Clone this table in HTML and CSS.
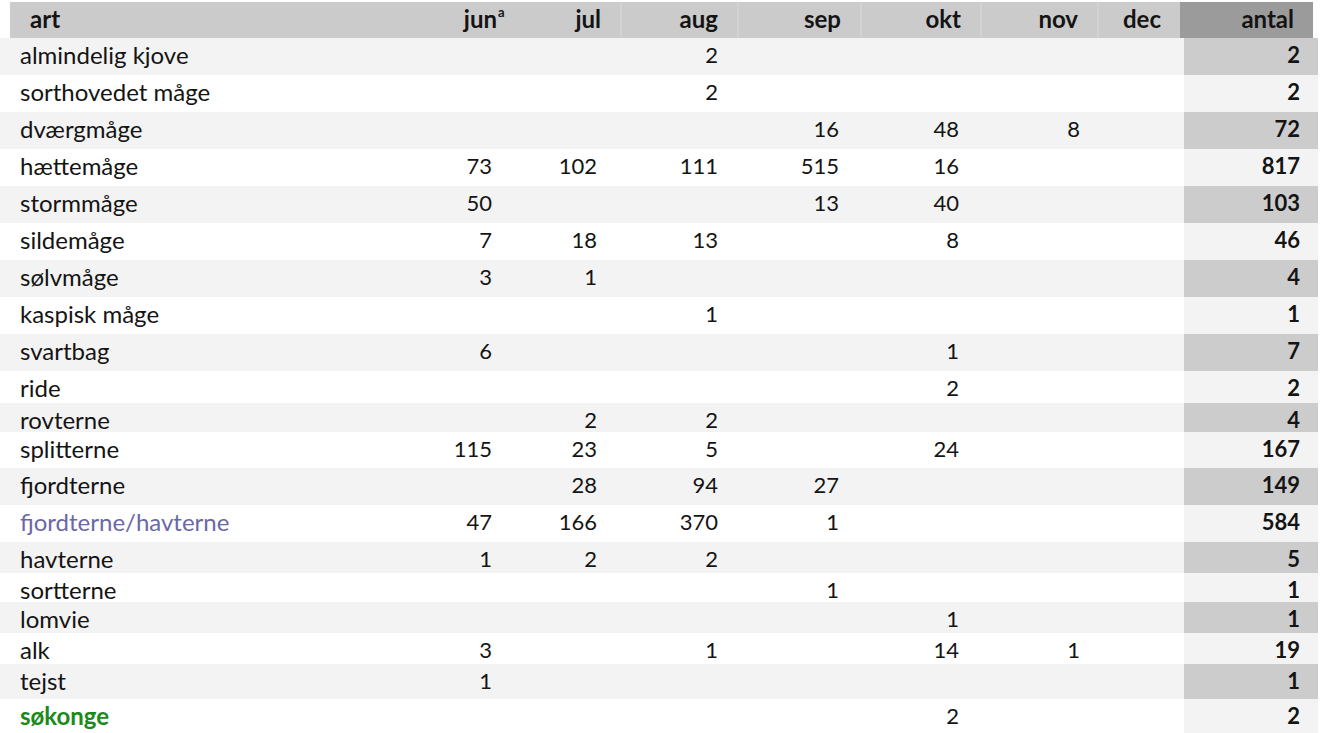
FILE: index.html
```html
<!DOCTYPE html>
<html lang="da">
<head>
<meta charset="utf-8">
<title>art</title>
<link rel="stylesheet" href="styles.css">
</head>
<body>
<div class="table">
  <div class="head">
    <div class="hc first">art</div>
    <div class="hc num"><span class="jun">jun<sup>a</sup></span></div>
    <div class="hc num">jul</div>
    <div class="hc num sep">aug</div>
    <div class="hc num sep">sep</div>
    <div class="hc num sep">okt</div>
    <div class="hc num sep">nov</div>
    <div class="hc num sep">dec</div>
    <div class="hc num total">antal</div>
  </div>

  <div class="row odd h37"><div class="c name">almindelig kjove</div><div class="c"></div><div class="c"></div><div class="c">2</div><div class="c"></div><div class="c"></div><div class="c"></div><div class="c"></div><div class="c tot">2</div></div>
  <div class="row even h37"><div class="c name">sorthovedet måge</div><div class="c"></div><div class="c"></div><div class="c">2</div><div class="c"></div><div class="c"></div><div class="c"></div><div class="c"></div><div class="c tot">2</div></div>
  <div class="row odd h37"><div class="c name">dværgmåge</div><div class="c"></div><div class="c"></div><div class="c"></div><div class="c">16</div><div class="c">48</div><div class="c">8</div><div class="c"></div><div class="c tot">72</div></div>
  <div class="row even h37"><div class="c name">hættemåge</div><div class="c">73</div><div class="c">102</div><div class="c">111</div><div class="c">515</div><div class="c">16</div><div class="c"></div><div class="c"></div><div class="c tot">817</div></div>
  <div class="row odd h37"><div class="c name">stormmåge</div><div class="c">50</div><div class="c"></div><div class="c"></div><div class="c">13</div><div class="c">40</div><div class="c"></div><div class="c"></div><div class="c tot">103</div></div>
  <div class="row even h37"><div class="c name">sildemåge</div><div class="c">7</div><div class="c">18</div><div class="c">13</div><div class="c"></div><div class="c">8</div><div class="c"></div><div class="c"></div><div class="c tot">46</div></div>
  <div class="row odd h37"><div class="c name">sølvmåge</div><div class="c">3</div><div class="c">1</div><div class="c"></div><div class="c"></div><div class="c"></div><div class="c"></div><div class="c"></div><div class="c tot">4</div></div>
  <div class="row even h37"><div class="c name">kaspisk måge</div><div class="c"></div><div class="c"></div><div class="c">1</div><div class="c"></div><div class="c"></div><div class="c"></div><div class="c"></div><div class="c tot">1</div></div>
  <div class="row odd h37"><div class="c name">svartbag</div><div class="c">6</div><div class="c"></div><div class="c"></div><div class="c"></div><div class="c">1</div><div class="c"></div><div class="c"></div><div class="c tot">7</div></div>
  <div class="row even h32"><div class="c name">ride</div><div class="c"></div><div class="c"></div><div class="c"></div><div class="c"></div><div class="c">2</div><div class="c"></div><div class="c"></div><div class="c tot">2</div></div>
  <div class="row odd h29"><div class="c name">rovterne</div><div class="c"></div><div class="c">2</div><div class="c">2</div><div class="c"></div><div class="c"></div><div class="c"></div><div class="c"></div><div class="c tot">4</div></div>
  <div class="row even h36"><div class="c name">splitterne</div><div class="c">115</div><div class="c">23</div><div class="c">5</div><div class="c"></div><div class="c">24</div><div class="c"></div><div class="c"></div><div class="c tot">167</div></div>
  <div class="row odd h37"><div class="c name">fjordterne</div><div class="c"></div><div class="c">28</div><div class="c">94</div><div class="c">27</div><div class="c"></div><div class="c"></div><div class="c"></div><div class="c tot">149</div></div>
  <div class="row even h37"><div class="c name blue">fjordterne/havterne</div><div class="c">47</div><div class="c">166</div><div class="c">370</div><div class="c">1</div><div class="c"></div><div class="c"></div><div class="c"></div><div class="c tot">584</div></div>
  <div class="row odd h31"><div class="c name">havterne</div><div class="c">1</div><div class="c">2</div><div class="c">2</div><div class="c"></div><div class="c"></div><div class="c"></div><div class="c"></div><div class="c tot">5</div></div>
  <div class="row even h29"><div class="c name">sortterne</div><div class="c"></div><div class="c"></div><div class="c"></div><div class="c">1</div><div class="c"></div><div class="c"></div><div class="c"></div><div class="c tot">1</div></div>
  <div class="row odd h31"><div class="c name">lomvie</div><div class="c"></div><div class="c"></div><div class="c"></div><div class="c"></div><div class="c">1</div><div class="c"></div><div class="c"></div><div class="c tot">1</div></div>
  <div class="row even h31"><div class="c name">alk</div><div class="c">3</div><div class="c"></div><div class="c">1</div><div class="c"></div><div class="c">14</div><div class="c">1</div><div class="c"></div><div class="c tot">19</div></div>
  <div class="row odd h35"><div class="c name">tejst</div><div class="c">1</div><div class="c"></div><div class="c"></div><div class="c"></div><div class="c"></div><div class="c"></div><div class="c"></div><div class="c tot">1</div></div>
  <div class="row even h37"><div class="c name green">søkonge</div><div class="c"></div><div class="c"></div><div class="c"></div><div class="c"></div><div class="c">2</div><div class="c"></div><div class="c"></div><div class="c tot">2</div></div>
</div>
</body>
</html>
```

FILE: styles.css
```css
html, body {
  margin: 0;
  padding: 0;
  background: #ffffff;
}
body {
  font-family: Lato, "Open Sans", "Liberation Sans", sans-serif;
  font-size: 22px;
  color: #141414;
}
.table {
  padding-top: 2px;
}
.head {
  display: grid;
  grid-template-columns: 395px 111px 104px 117px 123px 120px 117px 83px 133px;
  margin-left: 10px;
  width: 1303px;
  height: 36px;
  background: #cbcbcb;
}
.hc {
  font-weight: 700;
  font-size: 24px;
  padding: 0 19px 0 0;
  line-height: 34px;
  white-space: nowrap;
}
.hc.first {
  padding-left: 20px;
}
.hc.num {
  text-align: right;
}
.hc.sep {
  border-left: 2px solid #d3d3d3;
}
.hc.total {
  background: #9b9b9b;
}
.jun {
  position: relative;
}
.jun sup {
  position: absolute;
  left: 100%;
  top: 2px;
  font-size: 13px;
  line-height: 1;
  margin-left: 1px;
}
.row {
  display: grid;
  grid-template-columns: 400px 111px 105px 121px 121px 120px 121px 85px 134px;
  width: 1318px;
}
.row.odd { background: #f3f3f3; }
.row.even { background: #ffffff; }
.h37 { height: 37px; }
.h36 { height: 36px; }
.h35 { height: 35px; }
.h32 { height: 32px; }
.h31 { height: 31px; }
.h29 { height: 29px; }
.c {
  text-align: right;
  padding-right: 19px;
  line-height: 34px;
  white-space: nowrap;
}
.c.name {
  text-align: left;
  padding-left: 20px;
  font-size: 24px;
  line-height: 33px;
}
.c.tot {
  font-weight: 700;
  padding-right: 18px;
}
.row.odd .tot { background: #cccccc; }
.row.even .tot { background: #f3f3f3; }
.blue { color: #6a68a6; }
.green { color: #1a8a1a; font-weight: 700; }
```
